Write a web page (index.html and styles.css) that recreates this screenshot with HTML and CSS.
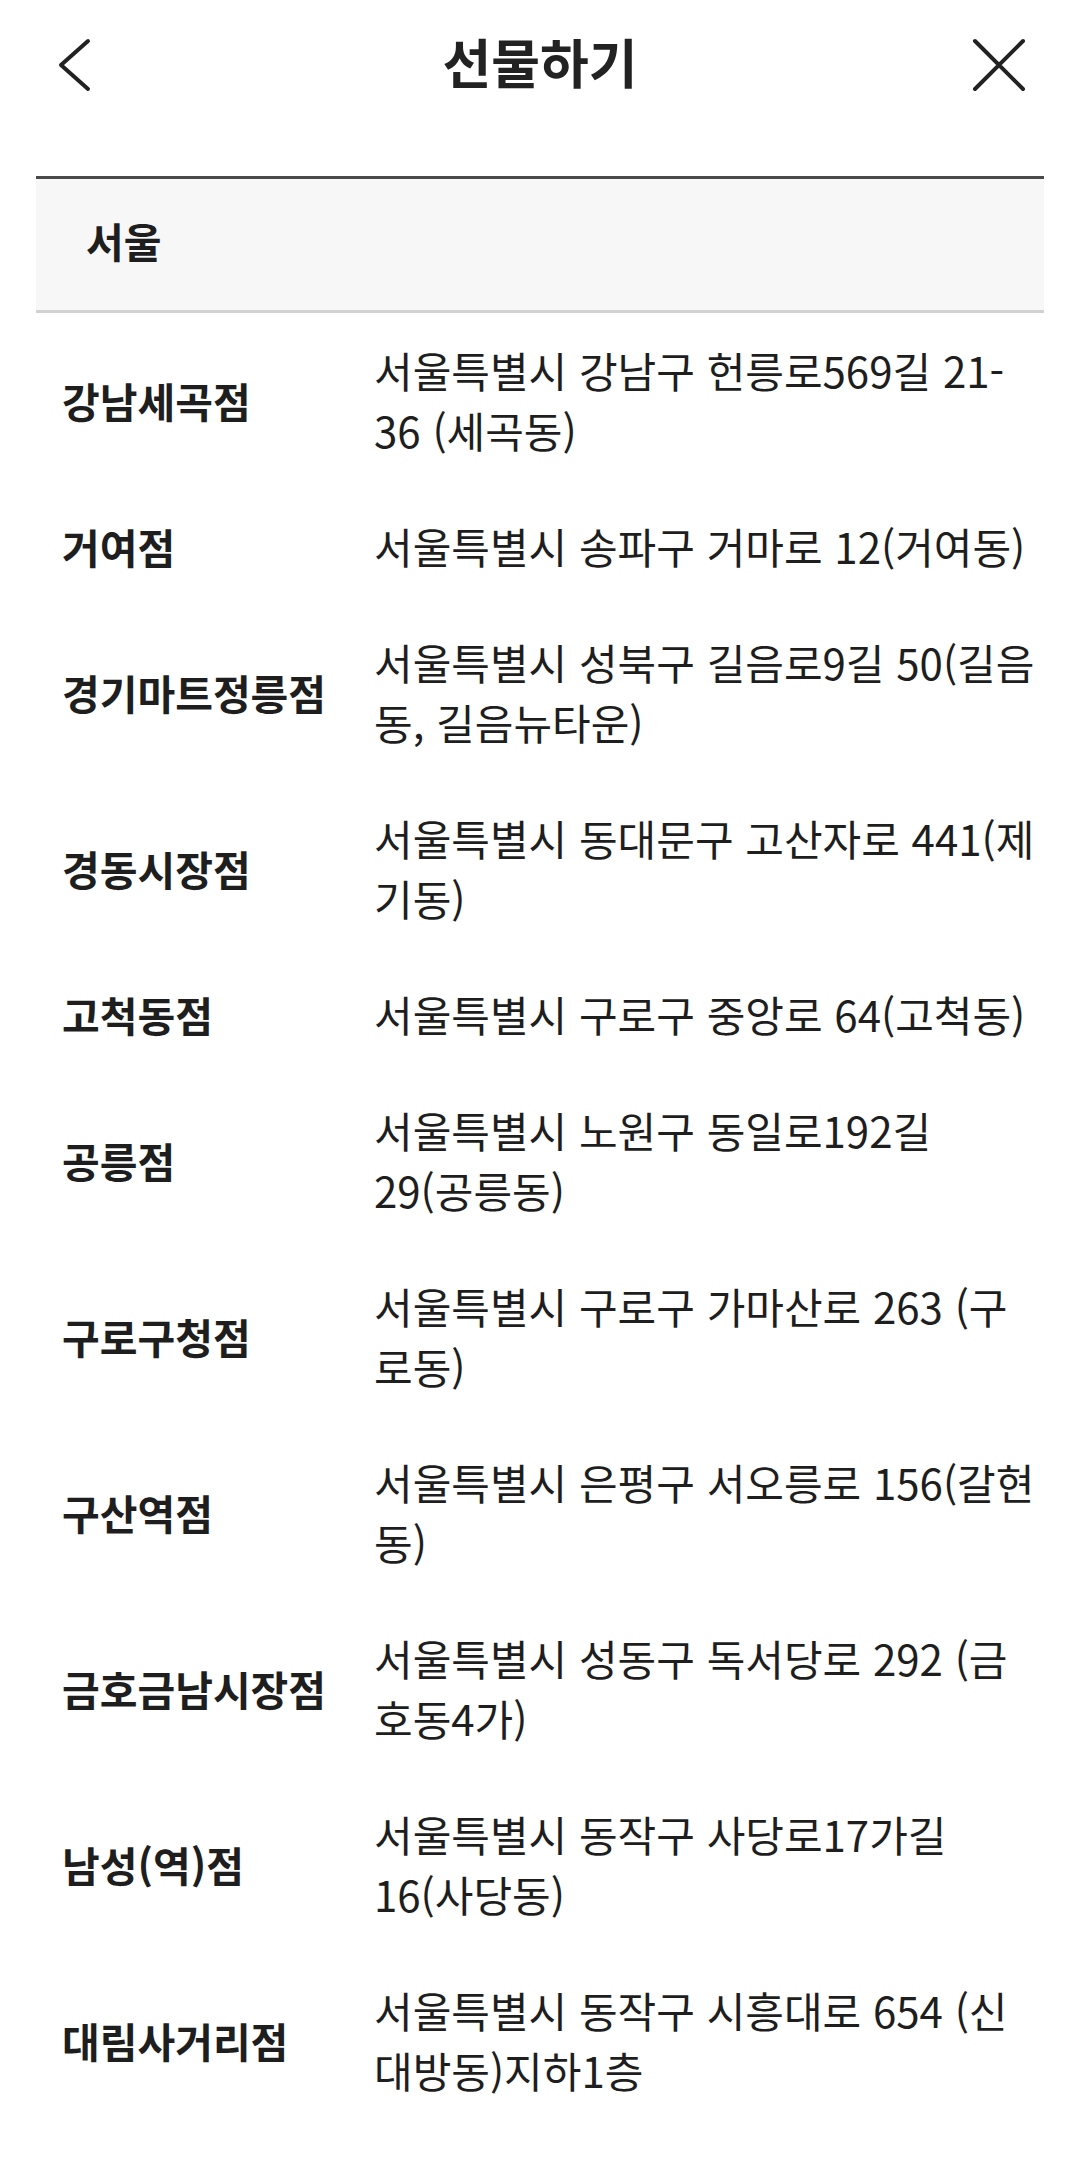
FILE: index.html
```html
<!DOCTYPE html>
<html lang="ko">
<head>
<meta charset="utf-8">
<title>선물하기</title>
<link rel="stylesheet" href="styles.css">
</head>
<body>
<header class="topbar">
  <div class="topbar-left">
    <svg class="icon-back" width="40" height="56" viewBox="0 0 40 56"><polyline points="36,4 9,28 36,52" fill="none" stroke="#222" stroke-width="4" stroke-linecap="round" stroke-linejoin="round"/></svg>
  </div>
  <h1 class="title">선물하기</h1>
  <div class="topbar-right">
    <svg class="icon-close" width="56" height="56" viewBox="0 0 56 56"><path d="M4 4 L52 52 M52 4 L4 52" fill="none" stroke="#222" stroke-width="4" stroke-linecap="round"/></svg>
  </div>
</header>
<main class="content">
  <section class="region">
    <h2 class="region-title">서울</h2>
  </section>
  <ul class="stores">
    <li class="store"><span class="name">강남세곡점</span><span class="addr">서울특별시 강남구 헌릉로569길 21-<br>36 (세곡동)</span></li>
    <li class="store"><span class="name">거여점</span><span class="addr">서울특별시 송파구 거마로 12(거여동)</span></li>
    <li class="store"><span class="name">경기마트정릉점</span><span class="addr">서울특별시 성북구 길음로9길 50(길음<br>동, 길음뉴타운)</span></li>
    <li class="store"><span class="name">경동시장점</span><span class="addr">서울특별시 동대문구 고산자로 441(제<br>기동)</span></li>
    <li class="store"><span class="name">고척동점</span><span class="addr">서울특별시 구로구 중앙로 64(고척동)</span></li>
    <li class="store"><span class="name">공릉점</span><span class="addr">서울특별시 노원구 동일로192길<br>29(공릉동)</span></li>
    <li class="store"><span class="name">구로구청점</span><span class="addr">서울특별시 구로구 가마산로 263 (구<br>로동)</span></li>
    <li class="store"><span class="name">구산역점</span><span class="addr">서울특별시 은평구 서오릉로 156(갈현<br>동)</span></li>
    <li class="store"><span class="name">금호금남시장점</span><span class="addr">서울특별시 성동구 독서당로 292 (금<br>호동4가)</span></li>
    <li class="store"><span class="name">남성(역)점</span><span class="addr">서울특별시 동작구 사당로17가길<br>16(사당동)</span></li>
    <li class="store"><span class="name">대림사거리점</span><span class="addr">서울특별시 동작구 시흥대로 654 (신<br>대방동)지하1층</span></li>
  </ul>
</main>
</body>
</html>
```

FILE: styles.css
```css
* { box-sizing: border-box; }
html, body {
  margin: 0;
  padding: 0;
  background: #fff;
}
body {
  font-family: "Noto Sans CJK KR", "Noto Sans", sans-serif;
  color: #1e1e1e;
}
.topbar {
  height: 130px;
  display: grid;
  grid-template-columns: 1fr auto 1fr;
  align-items: center;
}
.topbar-left {
  padding-left: 52px;
  display: flex;
  align-items: center;
}
.topbar-right {
  padding-right: 53px;
  display: flex;
  justify-content: flex-end;
  align-items: center;
}
.icon-back, .icon-close { display: block; }
.title {
  margin: 0 0 8px;
  font-size: 53px;
  font-weight: 700;
  line-height: 1;
  color: #222;
}
.content {
  margin: 46px 36px 0;
}
.region {
  border-top: 3px solid #4a4a4a;
  border-bottom: 3px solid #d2d2d2;
  background: #f7f7f7;
  height: 137px;
  display: flex;
  align-items: center;
  padding-left: 50px;
}
.region-title {
  margin: 0 0 8px;
  font-size: 41px;
  font-weight: 700;
  line-height: 1;
}
.stores {
  list-style: none;
  margin: 0;
  padding: 0;
}
.store {
  display: grid;
  grid-template-columns: 312px 1fr;
  align-items: center;
  padding: 26.5px 0 29.5px 26px;
}
.name {
  font-size: 41px;
  font-weight: 700;
  line-height: 60px;
}
.addr {
  font-size: 42px;
  font-weight: 400;
  line-height: 60px;
  white-space: nowrap;
}
```
